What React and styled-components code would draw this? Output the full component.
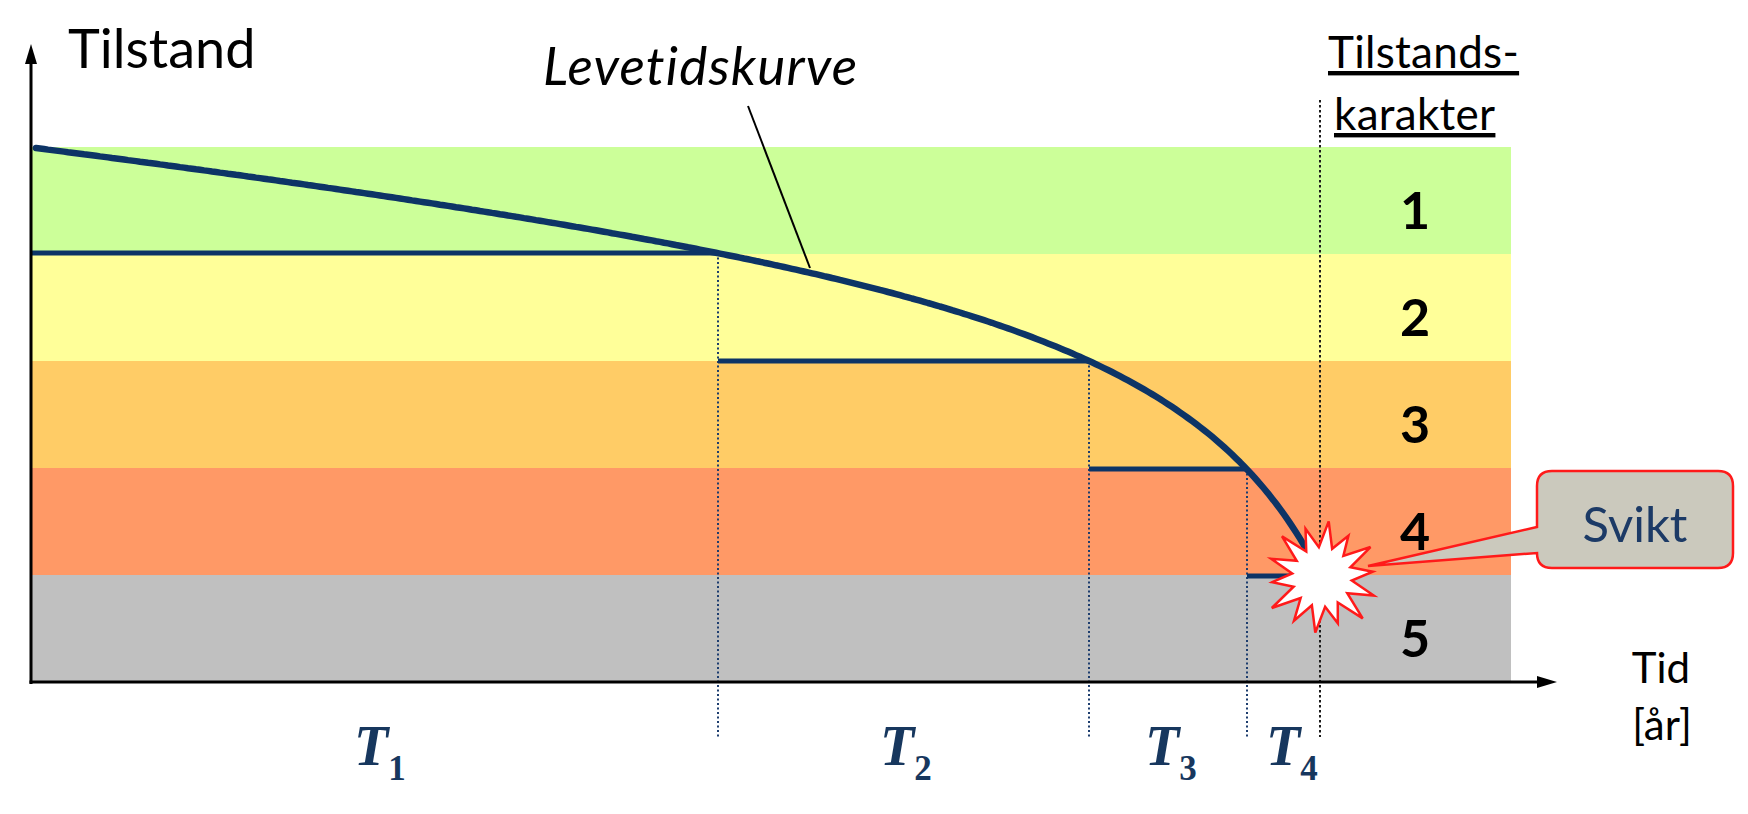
import React from "react";
import styled, { createGlobalStyle } from "styled-components";

const GlobalStyle = createGlobalStyle`
  html, body {
    margin: 0;
    padding: 0;
    background: #ffffff;
  }
  body {
    font-family: "Lato", "Liberation Sans", sans-serif;
  }
`;

const Page = styled.div`
  width: 1748px;
  height: 814px;
  display: flex;
  background: #ffffff;
  overflow: hidden;
`;

const Chart = styled.svg`
  display: block;
  width: 1748px;
  height: 814px;
`;

const Band = styled.rect`
  fill: ${(p) => p.$fill};
`;

const Step = styled.line`
  stroke: #0d3466;
  stroke-width: 5;
`;

const Curve = styled.path`
  fill: none;
  stroke: #0d3466;
  stroke-width: 6.5;
  stroke-linecap: round;
  stroke-linejoin: round;
`;

const Guide = styled.line`
  stroke: ${(p) => (p.$dark ? "#1a1a1a" : "#1d3d6e")};
  stroke-width: 2;
  stroke-dasharray: ${(p) => (p.$dark ? "2.5 2.5" : "2 2.5")};
`;

const Axis = styled.line`
  stroke: #000;
  stroke-width: 3;
`;

const Arrow = styled.polygon`
  fill: #000;
`;

const Leader = styled.line`
  stroke: #000;
  stroke-width: 2;
`;

const Label = styled.text`
  font-family: "Lato", "Liberation Sans", sans-serif;
  font-size: ${(p) => p.$size}px;
  font-style: ${(p) => (p.$italic ? "italic" : "normal")};
  letter-spacing: ${(p) => p.$spacing || 0}px;
  text-decoration: ${(p) => (p.$underline ? "underline" : "none")};
  text-decoration-thickness: 2.5px;
  fill: #000;
`;

const Grade = styled.text`
  font-family: "Lato", "Liberation Sans", sans-serif;
  font-size: 52px;
  font-weight: 700;
  fill: #000;
  text-anchor: middle;
`;

const Period = styled.text`
  font-family: "Liberation Serif", "Times New Roman", serif;
  font-size: 56px;
  font-weight: 700;
  font-style: italic;
  fill: #17375e;
`;

const Sub = styled.tspan`
  font-size: 35px;
  font-style: normal;
`;

const Burst = styled.polygon`
  fill: #ffffff;
  stroke: #ff1a1a;
  stroke-width: 2.5;
  stroke-linejoin: miter;
`;

const Callout = styled.path`
  fill: #cbc9bd;
  stroke: #ff1a1a;
  stroke-width: 2.5;
`;

const CalloutText = styled.text`
  font-family: "Lato", "Liberation Sans", sans-serif;
  font-size: 49px;
  fill: #1c3a66;
  text-anchor: middle;
`;

const bands = [
  { grade: 1, fill: "#ccff99" },
  { grade: 2, fill: "#ffff99" },
  { grade: 3, fill: "#ffcc66" },
  { grade: 4, fill: "#ff9966" },
  { grade: 5, fill: "#c0c0c0" },
];

const BAND_TOP = 147;
const BAND_H = 107;
const LEFT = 31;
const RIGHT = 1511;

// lifetime curve: gentle linear decline plus a hyperbolic drop towards failure
const lifeY = (x) => 148 + 0.101 * (x - 36) + 60902 * (1 / (1500 - x) - 1 / 1464);

function curvePath(from, to, step) {
  const pts = [];
  for (let x = from; x < to; x += step) pts.push([x, lifeY(x)]);
  pts.push([to, lifeY(to)]);
  return pts
    .map(([x, y], i) => `${i ? "L" : "M"}${x.toFixed(1)},${y.toFixed(1)}`)
    .join(" ");
}

function burstPoints(cx, cy) {
  const outer = [56, 49, 57, 51, 55, 58, 49, 56, 52, 59, 50, 54, 57, 51];
  const n = outer.length;
  const pts = [];
  for (let i = 0; i < n; i++) {
    const a = (i / n) * Math.PI * 2 - Math.PI / 2 + 0.12;
    const b = a + Math.PI / n;
    pts.push(`${cx + Math.cos(a) * outer[i]},${cy + Math.sin(a) * outer[i]}`);
    pts.push(`${cx + Math.cos(b) * 30},${cy + Math.sin(b) * 30}`);
  }
  return pts.join(" ");
}

const steps = [
  { x1: LEFT, x2: 717, y: 253 },
  { x1: 718, x2: 1089, y: 361 },
  { x1: 1089, x2: 1245, y: 469 },
  { x1: 1247, x2: 1292, y: 576 },
];

const guides = [
  { x: 718, y1: 253 },
  { x: 1089, y1: 361 },
  { x: 1247, y1: 469 },
];

const periods = [
  { x: 354, n: 1 },
  { x: 880, n: 2 },
  { x: 1145, n: 3 },
  { x: 1266, n: 4 },
];

const calloutPath =
  "M1552,471 H1718 Q1733,471 1733,486 V553 Q1733,568 1718,568 H1552 Q1537,568 1537,553 V553 L1368,566 L1537,527 V486 Q1537,471 1552,471 Z";

export default function App() {
  return (
    <Page>
      <GlobalStyle />
      <Chart viewBox="0 0 1748 814">
        {bands.map((b, i) => (
          <Band
            key={b.grade}
            x={LEFT}
            y={BAND_TOP + i * BAND_H}
            width={RIGHT - LEFT}
            height={BAND_H + 0.5}
            $fill={b.fill}
          />
        ))}

        {guides.map((g) => (
          <Guide key={g.x} x1={g.x} x2={g.x} y1={g.y1} y2={737} />
        ))}
        <Guide $dark x1={1320} x2={1320} y1={100} y2={737} />

        {steps.map((s) => (
          <Step key={s.y} x1={s.x1} x2={s.x2} y1={s.y} y2={s.y} />
        ))}
        <Curve d={curvePath(36, 1307, 4)} />

        <Axis x1={LEFT} y1={684} x2={LEFT} y2={60} />
        <Arrow points={`${LEFT},44 ${LEFT - 6},64 ${LEFT + 6},64`} />
        <Axis x1={LEFT - 1.5} y1={682} x2={1540} y2={682} />
        <Arrow points="1557,682 1537,676 1537,688" />

        <Leader x1={748} y1={106} x2={810} y2={268} />

        {bands.map((b, i) => (
          <Grade key={b.grade} x={1415} y={BAND_TOP + i * BAND_H + 82}>
            {b.grade}
          </Grade>
        ))}

        <Label x={68} y={68} $size={54}>
          Tilstand
        </Label>
        <Label x={543} y={85} $size={53} $italic $spacing={1.2}>
          Levetidskurve
        </Label>
        <Label x={1328} y={68} $size={44} $spacing={0.3} $underline>
          Tilstands-
        </Label>
        <Label x={1334} y={130} $size={44} $spacing={0.3} $underline>
          karakter
        </Label>
        <Label x={1661} y={683} $size={42} textAnchor="middle">
          Tid
        </Label>
        <Label x={1662} y={740} $size={42} textAnchor="middle">
          [år]
        </Label>

        {periods.map((p) => (
          <Period key={p.n} x={p.x} y={765}>
            T
            <Sub dy={15}>{p.n}</Sub>
          </Period>
        ))}

        <Burst points={burstPoints(1322, 577)} />
        <Callout d={calloutPath} />
        <CalloutText x={1635} y={542}>
          Svikt
        </CalloutText>
      </Chart>
    </Page>
  );
}
